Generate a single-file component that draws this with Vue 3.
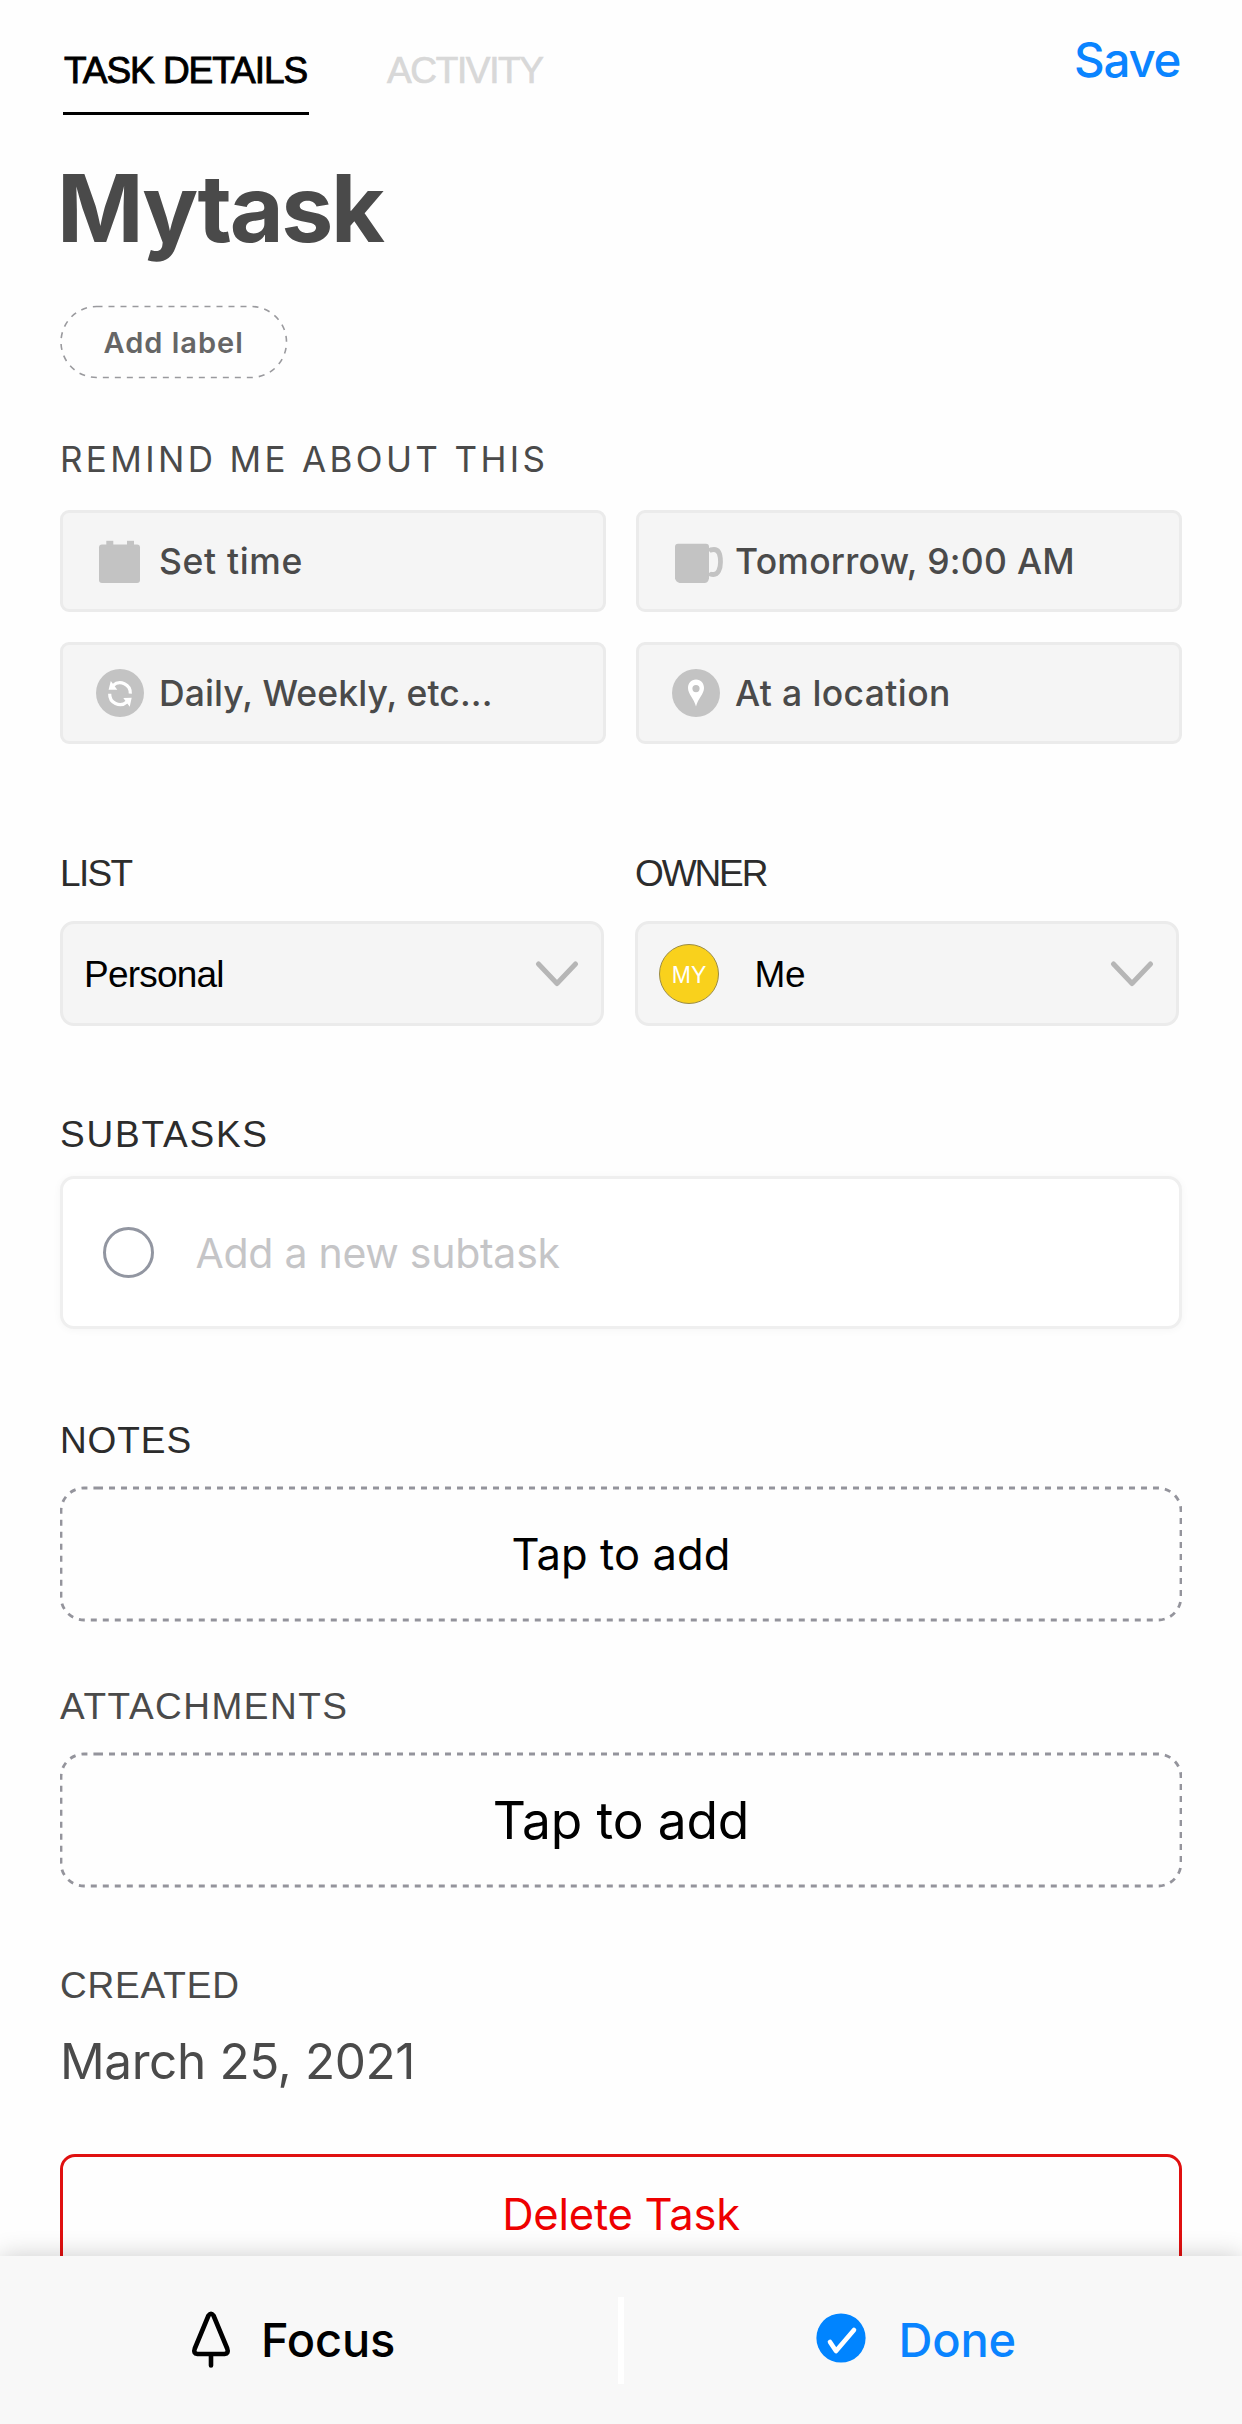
<script setup>
const dashPath =
  'M37 2H1098A23 23 0 0 1 1121 25V111A23 23 0 0 1 1098 134H24A23 23 0 0 1 1 111V25A23 23 0 0 1 24 2H37'
</script>

<template>
  <div class="screen">
    <header class="top">
      <nav class="tabs">
        <span class="tab active">TASK DETAILS</span>
        <span class="tab second">ACTIVITY</span>
      </nav>
      <span class="save">Save</span>
    </header>

    <main class="content">
      <h1 class="title">Mytask</h1>
      <button class="pill">
        <svg class="outline" width="228" height="75" viewBox="0 0 228 75">
          <rect x="1" y="1.500" width="225.500" height="71" rx="35.500" fill="none" stroke="#9a9a9e" stroke-width="1.6" stroke-dasharray="6 6" />
        </svg>
        <span class="pill-text">Add label</span>
      </button>

      <h2 class="label remind">REMIND ME ABOUT THIS</h2>
      <div class="options">
        <div class="option">
          <svg class="oicon" width="48" height="48" viewBox="0 0 48 48" fill="#c3c3c3">
            <rect x="3" y="7.500" width="41" height="38.500" rx="3" />
            <rect x="10.300" y="3.800" width="7" height="6" />
            <rect x="31" y="3.800" width="7" height="6" />
          </svg>
          <span class="otext t1">Set time</span>
        </div>
        <div class="option">
          <svg class="oicon" width="52" height="48" viewBox="0 0 52 48">
            <path d="M6 6.800H34Q37 6.800 37 9.800V41.500Q36 46 32.500 46H7.500Q4 45 3 41.500V9.800Q3 6.800 6 6.800Z" fill="#c3c3c3" />
            <path d="M37 14Q38.500 12.500 42 12.500C46.500 12.500 48.500 18 48.500 25S46 37.500 41.500 37.500Q38 37.500 37 36" fill="none" stroke="#c3c3c3" stroke-width="4.800" />
          </svg>
          <span class="otext t2">Tomorrow, 9:00 AM</span>
        </div>
        <div class="option">
          <svg class="oicon" width="48" height="48" viewBox="0 0 48 48">
            <circle cx="24" cy="24" r="24" fill="#c3c3c3" />
            <g fill="none" stroke="#fff" stroke-width="3.200">
              <path d="M17 16.600A10.300 10.300 0 0 1 34.300 24.600" />
              <path d="M13.700 24.800A10.300 10.300 0 0 0 30.800 33" />
            </g>
            <path d="M14.800 12L12.600 20.700H21.300ZM27.300 29L35.700 28.800L33.700 37.700Z" fill="#fff" />
          </svg>
          <span class="otext t3">Daily, Weekly, etc...</span>
        </div>
        <div class="option">
          <svg class="oicon" width="48" height="48" viewBox="0 0 48 48">
            <circle cx="24" cy="24" r="24" fill="#c3c3c3" />
            <path fill="#fff" fill-rule="evenodd" d="M24 10.500C19 10.500 16 14.300 16 19C16 25 22 29.500 24 37.500C26 29.500 32 25 32 19C32 14.300 29 10.500 24 10.500ZM24 16A3.600 3.600 0 1 1 24 23.200A3.600 3.600 0 1 1 24 16Z" />
          </svg>
          <span class="otext t4">At a location</span>
        </div>
      </div>

      <div class="selects">
        <div class="field">
          <h2 class="label list">LIST</h2>
          <div class="select">
            <span class="value personal">Personal</span>
            <svg class="chev" width="44" height="28" viewBox="0 0 44 28"><path d="M3.500 4L22 23.500L40.500 4" /></svg>
          </div>
        </div>
        <div class="field">
          <h2 class="label owner">OWNER</h2>
          <div class="select">
            <span class="avatar">MY</span>
            <span class="value me">Me</span>
            <svg class="chev" width="44" height="28" viewBox="0 0 44 28"><path d="M3.500 4L22 23.500L40.500 4" /></svg>
          </div>
        </div>
      </div>

      <h2 class="label subtasks">SUBTASKS</h2>
      <div class="subtask">
        <span class="ring"></span>
        <span class="placeholder">Add a new subtask</span>
      </div>

      <h2 class="label notes">NOTES</h2>
      <div class="dashed">
        <svg class="outline" width="1122" height="136" viewBox="0 0 1122 136"><path :d="dashPath" /></svg>
        <span class="tap">Tap to add</span>
      </div>

      <h2 class="label attachments">ATTACHMENTS</h2>
      <div class="dashed">
        <svg class="outline" width="1122" height="136" viewBox="0 0 1122 136"><path :d="dashPath" /></svg>
        <span class="tap large">Tap to add</span>
      </div>

      <h2 class="label created">CREATED</h2>
      <p class="date">March 25, 2021</p>

      <button class="delete">Delete Task</button>
    </main>

    <footer class="bar">
      <div class="action focus">
        <svg class="tree" width="42" height="58" viewBox="0 0 42 58">
          <path d="M18.500 4.500Q21 1 23.500 4.500L37.200 37.500Q39 42.500 34.500 43H7.500Q3 42.500 4.800 37.500ZM21 43V54.500" fill="none" stroke="#000" stroke-width="4.600" stroke-linecap="round" stroke-linejoin="round" />
        </svg>
        <span class="atext">Focus</span>
      </div>
      <div class="divider"></div>
      <div class="action done">
        <svg class="check" width="50" height="50" viewBox="0 0 50 50">
          <circle cx="25" cy="25" r="24.600" fill="#0084ff" />
          <path d="M14 29L20 38L38 17" fill="none" stroke="#fff" stroke-width="4.600" stroke-linecap="round" stroke-linejoin="round" />
        </svg>
        <span class="atext">Done</span>
      </div>
    </footer>
  </div>
</template>

<style>
body { margin: 0; background: #fefefe; }
</style>

<style scoped>
.screen {
  display: flex;
  flex-direction: column;
  width: 1242px;
  height: 2424px;
  overflow: hidden;
  background: #fefefe;
  font-family: Inter, "Noto Sans", sans-serif;
  white-space: nowrap;
}
h1, h2, p { margin: 0; font-weight: 400; }
button { padding: 0; background: none; border: 0; font-family: inherit; }
svg { display: block; flex: none; }

.top {
  display: flex;
  justify-content: space-between;
  flex: none;
  box-sizing: border-box;
  height: 115px;
  padding: 0 58px 0 63px;
}
.tabs { display: flex; gap: 78px; }
.tab {
  box-sizing: border-box;
  height: 115px;
  padding-top: 51px;
  color: #d8d8d8;
  font: 400 37px/40px "Liberation Sans", sans-serif;
}
.tab.active {
  width: 246px;
  padding-left: 1px;
  border-bottom: 3px solid #000;
  color: #000;
  letter-spacing: -1.05px;
  -webkit-text-stroke: 0.9px #000;
}
.tab.second { letter-spacing: -1.36px; -webkit-text-stroke: 0.7px #d8d8d8; }
.save {
  width: 110px;
  padding-top: 30px;
  color: #0a84ff;
  font-size: 47.500px;
  font-weight: 450;
  line-height: 60px;
  letter-spacing: -1.27px;
}

.content {
  display: flex;
  flex: none;
  flex-direction: column;
  align-items: flex-start;
  width: 1122px;
  height: 2141px;
  padding: 0 60px;
  overflow: hidden;
}
.content > * { flex: none; }
.title {
  margin: 43px 0 0 -3px;
  color: #4a4a4a;
  font-size: 93px;
  font-weight: 700;
  line-height: 100px;
  letter-spacing: -2.35px;
}
.outline { position: absolute; inset: 0; }
.pill {
  position: relative;
  width: 228px;
  height: 75px;
  margin-top: 47px;
  text-align: left;
}
.pill-text {
  display: block;
  padding-left: 43.500px;
  color: #666;
  font-size: 29px;
  font-weight: 600;
  line-height: 75px;
  letter-spacing: 1px;
}
.label {
  height: 40px;
  color: #2c2c2c;
  font: 400 37px/42px "Liberation Sans", sans-serif;
}
.remind {
  margin-top: 59px;
  color: #4a4a4a;
  font: 400 35px/40px Inter, sans-serif;
  letter-spacing: 3.35px;
}
.options {
  display: grid;
  grid-template-columns: 546px 546px;
  grid-auto-rows: 102px;
  gap: 30px;
  margin-top: 31px;
}
.option {
  display: flex;
  align-items: center;
  box-sizing: border-box;
  padding-left: 33px;
  border: 3px solid #ebebeb;
  border-radius: 9px;
  background: #f5f5f5;
}
.oicon { width: 52px; height: 48px; }
.oicon[width="48"] { width: 48px; margin-right: 4px; }
.otext {
  margin-left: 11px;
  color: #4a4a4a;
  font-size: 35.500px;
  font-weight: 450;
}
.t1 { letter-spacing: 0.66px; }
.t2 { letter-spacing: 0.26px; }
.t3 { letter-spacing: 0.1px; }
.t4 { letter-spacing: 0.38px; }

.selects { display: flex; gap: 30px; margin-top: 109px; }
.field { width: 545px; }
.list { letter-spacing: -1.7px; }
.owner { letter-spacing: -2.1px; }
.select {
  display: flex;
  align-items: center;
  box-sizing: border-box;
  width: 544px;
  height: 105px;
  margin-top: 28px;
  padding: 0 22px 0 21px;
  border: 3px solid #ebebeb;
  border-radius: 14px;
  background: #f5f5f5;
}
.value { padding-top: 2px; color: #000; font: 400 37px/46px "Liberation Sans", sans-serif; }
.personal { letter-spacing: -0.8px; }
.me { margin-left: 35.500px; letter-spacing: -0.4px; }
.chev { margin-left: auto; }
.chev path {
  fill: none;
  stroke: #b6b6b6;
  stroke-width: 5;
  stroke-linecap: round;
  stroke-linejoin: round;
}
.avatar {
  box-sizing: border-box;
  width: 60px;
  height: 60px;
  border: 1px solid #9b8c45;
  border-radius: 50%;
  background: #f9d11c;
  color: #fff;
  font: 400 23px/60px "Liberation Sans", sans-serif;
  text-align: center;
}

.subtasks { margin-top: 88px; letter-spacing: 1.77px; }
.subtask {
  display: flex;
  align-items: center;
  box-sizing: border-box;
  width: 1122px;
  height: 153px;
  margin-top: 22px;
  padding-left: 40px;
  border: 3px solid #efefef;
  border-radius: 14px;
  background: #fff;
  box-shadow: 0 1px 9px rgba(0, 0, 0, 0.04);
}
.ring {
  box-sizing: border-box;
  width: 51px;
  height: 51px;
  border: 3px solid #9296a1;
  border-radius: 50%;
}
.placeholder {
  margin-left: 41.500px;
  color: #c5c5c7;
  font-size: 41px;
  letter-spacing: -0.27px;
}

.notes { margin-top: 91px; letter-spacing: 0.9px; }
.dashed {
  position: relative;
  display: flex;
  align-items: center;
  justify-content: center;
  width: 1122px;
  height: 136px;
  margin-top: 26px;
}
.dashed path {
  fill: none;
  stroke: #94949c;
  stroke-width: 2.8;
  stroke-dasharray: 6 6;
}
.tap { color: #000; font-size: 43.500px; letter-spacing: 0.08px; }
.tap.large { font-size: 51.500px; letter-spacing: -0.16px; }
.attachments { margin-top: 64px; color: #4a4a4a; letter-spacing: 1.5px; }
.created { margin-top: 77px; color: #4a4a4a; letter-spacing: 0.8px; }
.date {
  margin: 26px 0 0;
  color: #4a4a4a;
  font-size: 49.500px;
  line-height: 60px;
  letter-spacing: -0.4px;
}
.delete {
  box-sizing: border-box;
  width: 1122px;
  height: 120px;
  margin-top: 63px;
  border: 3px solid #e01010;
  border-radius: 15px;
  color: #ee0000;
  font-size: 43.500px;
  line-height: 114px;
  letter-spacing: -0.23px;
}

.bar {
  position: relative;
  display: flex;
  align-items: center;
  flex: none;
  box-sizing: border-box;
  height: 168px;
  background: #f8f8f8;
  box-shadow: 0 0 24px rgba(0, 0, 0, 0.2);
}
.action { display: flex; align-items: center; width: 618px; height: 168px; }
.atext { font-size: 47px; font-weight: 500; line-height: 60px; letter-spacing: -0.2px; }
.focus { color: #000; }
.tree { margin-left: 190px; }
.focus .atext { margin-left: 29px; }
.done { color: #0a84ff; }
.check { margin: -4px 0 0 192px; }
.done .atext { margin-left: 32.500px; }
.divider { width: 6px; height: 87px; background: #fff; }
</style>
